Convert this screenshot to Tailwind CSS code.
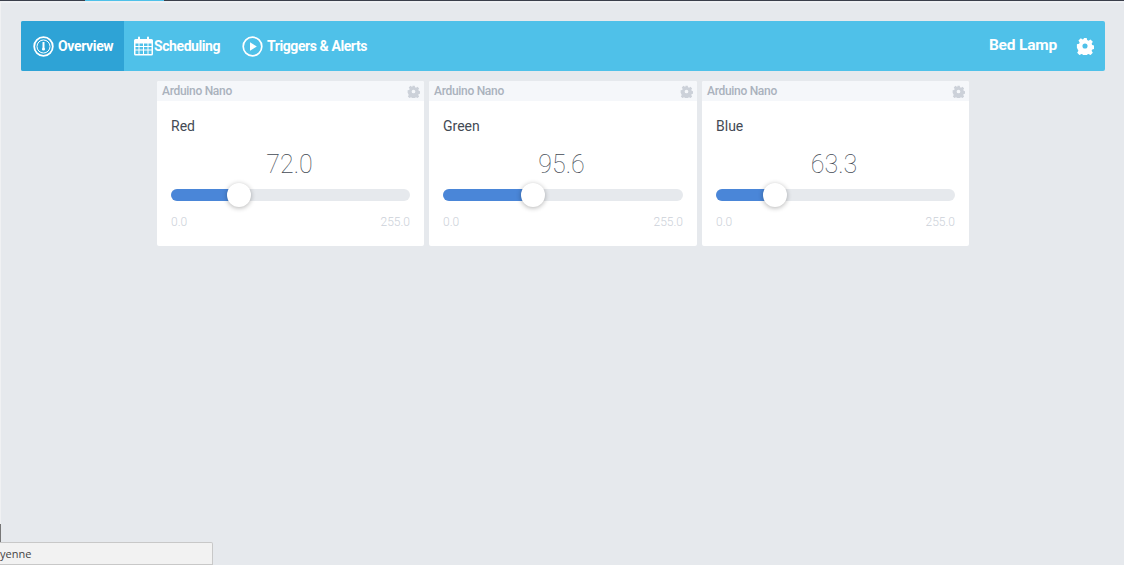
<!DOCTYPE html>
<html>
<head>
<meta charset="utf-8">
<script src="https://cdn.jsdelivr.net/npm/@tailwindcss/browser@4"></script>
</head>
<body class="relative h-[565px] w-[1124px] overflow-hidden bg-[#e6e9ed] font-['Roboto',sans-serif]">
<div class="flex h-px w-full bg-[#3a3f4b]">
  <div class="ml-[85px] w-[79px] bg-[#4fc1e9]"></div>
</div>
<div class="h-[2px] w-full bg-[#eef0f3]"></div>
<div class="absolute left-0 top-px h-[523px] w-px bg-[#f0f1f3]"></div>
<div class="px-[21px] pt-[18px] pr-[19px]">
  <nav class="flex h-[50px] items-stretch justify-between rounded-[2px] bg-[#4fc1e9] text-white">
    <div class="flex items-stretch">
      <div class="flex w-[103px] items-center gap-[4px] rounded-l-[2px] bg-[#2ea3d6] pl-[12px]">
        <svg width="21" height="21" viewBox="0 0 21 21" fill="none" stroke="white"><circle cx="10.5" cy="10.5" r="9.3" stroke-width="1.8"/><circle cx="10.5" cy="10.5" r="6.5" stroke-width="1"/><path d="M10.5 6v6" stroke-width="2"/><circle cx="10.5" cy="13" r="1.6" fill="white" stroke="none"/></svg>
        <span class="text-[14px] font-bold tracking-[-0.35px]">Overview</span>
      </div>
      <div class="flex w-[118px] items-center gap-px pl-[10px]">
        <svg width="19" height="20" viewBox="0 0 19 20" fill="white"><path fill-rule="evenodd" d="M1.5 3H4V1.5a1 1 0 0 1 2 0V3h7V1.500a1 1 0 0 1 2 0V3h2.500A1.500 1.500 0 0 1 19 4.500V18a1.500 1.500 0 0 1-1.500 1.500h-16A1.500 1.500 0 0 1 0 18V4.500A1.500 1.500 0 0 1 1.500 3ZM1.500 7.500v2.500h3V7.500Zm4 0v2.500h3.500V7.500Zm4.500 0v2.500h3.500V7.500Zm4.500 0v2.500h3V7.500ZM1.500 11v2.500h3V11Zm4 0v2.500h3.500V11Zm4.500 0v2.500h3.500V11Zm4.500 0v2.500h3V11ZM1.500 14.500V18h3v-3.500Zm4 0V18h3.500v-3.500Zm4.500 0V18h3.500v-3.500Zm4.500 0V18h3v-3.500Z"/></svg>
        <span class="text-[14px] font-bold tracking-[-0.42px]">Scheduling</span>
      </div>
      <div class="flex items-center gap-[4px]">
        <svg width="21" height="21" viewBox="0 0 21 21" fill="none"><circle cx="10.500" cy="10.500" r="9.300" stroke="white" stroke-width="1.700"/><path d="M8 6.200v8.600l6.800-4.300Z" fill="white"/></svg>
        <span class="text-[14px] font-bold tracking-[-0.42px]">Triggers &amp; Alerts</span>
      </div>
    </div>
    <div class="flex items-center gap-[19px] pr-[11px]">
      <span class="text-[15.500px] font-bold tracking-[-0.2px]">Bed Lamp</span>
      <svg width="18" height="18" viewBox="0 0 24 24" fill="white"><path fill-rule="evenodd" d="M9.500 0h5l.7 3.200 2.100.9 2.800-1.800 3.500 3.500-1.800 2.800.9 2.100 3.200.7v5l-3.200.7-.9 2.100 1.800 2.800-3.500 3.500-2.800-1.800-2.100.9-.7 3.200h-5l-.7-3.200-2.100-.9-2.800 1.800-3.500-3.500 1.800-2.800-.9-2.100L0 14.500v-5l3.200-.7.9-2.100-1.800-2.800L5.800.4l2.800 1.800 2.100-.9ZM12 8.200a3.800 3.800 0 1 0 0 7.600 3.800 3.800 0 0 0 0-7.600Z" transform="translate(1.200 1.200) scale(.9)"/></svg>
    </div>
  </nav>
  <div class="mt-[10px] ml-[136px] flex gap-[5px]">

    <section class="h-[165px] w-[267px] rounded-[2px] bg-white">
      <header class="flex h-5 items-center justify-between rounded-t-[2px] bg-[#f5f7fa] pl-[5px] pr-[4px]">
        <span class="text-[12px] font-medium tracking-[-0.3px] text-[#aab2bd]">Arduino Nano</span>
        <svg width="13" height="13" viewBox="0 0 24 24" fill="#ccd1d9"><path fill-rule="evenodd" d="M9.500 0h5l.7 3.200 2.100.9 2.800-1.800 3.500 3.500-1.800 2.800.9 2.100 3.200.7v5l-3.200.7-.9 2.100 1.800 2.800-3.500 3.500-2.800-1.800-2.100.9-.7 3.200h-5l-.7-3.200-2.100-.9-2.800 1.800-3.500-3.500 1.800-2.800-.9-2.100L0 14.500v-5l3.200-.7.9-2.100-1.800-2.800L5.800.4l2.800 1.800 2.100-.9ZM12 8.200a3.800 3.800 0 1 0 0 7.600 3.800 3.800 0 0 0 0-7.600Z" transform="translate(1.200 1.200) scale(.9)"/></svg>
      </header>
      <div class="px-[14px]">
        <p class="mt-[16px] text-[14px] leading-[18px] text-[#434a54]">Red</p>
        <p class="mt-[15px] pr-[2px] text-center text-[25px] font-thin leading-[30px] text-[#434a54]">72.0</p>
        <div class="relative mt-[9px] h-3 w-[239px] rounded-full bg-[#e6e9ed]">
          <div class="h-3 w-[68px] rounded-l-full bg-[#4a86d8]"></div>
          <div class="absolute left-[56px] top-[-6px] h-6 w-6 rounded-full bg-white shadow-[0_1px_5px_rgba(0,0,0,0.3)]"></div>
        </div>
        <div class="mt-[14px] flex justify-between text-[12px] font-light leading-[14px] text-[#ccd1d9]"><span>0.0</span><span>255.0</span></div>
      </div>
    </section>

    <section class="h-[165px] w-[268px] rounded-[2px] bg-white">
      <header class="flex h-5 items-center justify-between rounded-t-[2px] bg-[#f5f7fa] pl-[5px] pr-[4px]">
        <span class="text-[12px] font-medium tracking-[-0.3px] text-[#aab2bd]">Arduino Nano</span>
        <svg width="13" height="13" viewBox="0 0 24 24" fill="#ccd1d9"><path fill-rule="evenodd" d="M9.500 0h5l.7 3.200 2.100.9 2.800-1.800 3.500 3.500-1.800 2.800.9 2.100 3.200.7v5l-3.200.7-.9 2.100 1.800 2.800-3.500 3.500-2.800-1.800-2.100.9-.7 3.200h-5l-.7-3.200-2.100-.9-2.800 1.800-3.500-3.500 1.800-2.800-.9-2.100L0 14.500v-5l3.200-.7.9-2.100-1.800-2.800L5.800.4l2.800 1.800 2.100-.9ZM12 8.200a3.800 3.800 0 1 0 0 7.600 3.800 3.800 0 0 0 0-7.600Z" transform="translate(1.200 1.200) scale(.9)"/></svg>
      </header>
      <div class="px-[14px]">
        <p class="mt-[16px] text-[14px] leading-[18px] text-[#434a54]">Green</p>
        <p class="mt-[15px] pr-[3px] text-center text-[25px] font-thin leading-[30px] text-[#434a54]">95.6</p>
        <div class="relative mt-[9px] h-3 w-[240px] rounded-full bg-[#e6e9ed]">
          <div class="h-3 w-[90px] rounded-l-full bg-[#4a86d8]"></div>
          <div class="absolute left-[78px] top-[-6px] h-6 w-6 rounded-full bg-white shadow-[0_1px_5px_rgba(0,0,0,0.3)]"></div>
        </div>
        <div class="mt-[14px] flex justify-between text-[12px] font-light leading-[14px] text-[#ccd1d9]"><span>0.0</span><span>255.0</span></div>
      </div>
    </section>

    <section class="h-[165px] w-[267px] rounded-[2px] bg-white">
      <header class="flex h-5 items-center justify-between rounded-t-[2px] bg-[#f5f7fa] pl-[5px] pr-[4px]">
        <span class="text-[12px] font-medium tracking-[-0.3px] text-[#aab2bd]">Arduino Nano</span>
        <svg width="13" height="13" viewBox="0 0 24 24" fill="#ccd1d9"><path fill-rule="evenodd" d="M9.500 0h5l.7 3.200 2.100.9 2.800-1.800 3.500 3.500-1.800 2.800.9 2.100 3.200.7v5l-3.200.7-.9 2.100 1.800 2.800-3.500 3.500-2.800-1.800-2.100.9-.7 3.200h-5l-.7-3.200-2.100-.9-2.800 1.800-3.500-3.500 1.800-2.800-.9-2.100L0 14.500v-5l3.200-.7.9-2.100-1.800-2.800L5.800.4l2.800 1.800 2.100-.9ZM12 8.200a3.800 3.800 0 1 0 0 7.600 3.800 3.800 0 0 0 0-7.600Z" transform="translate(1.200 1.200) scale(.9)"/></svg>
      </header>
      <div class="px-[14px]">
        <p class="mt-[16px] text-[14px] leading-[18px] text-[#434a54]">Blue</p>
        <p class="mt-[15px] pr-[3px] text-center text-[25px] font-thin leading-[30px] text-[#434a54]">63.3</p>
        <div class="relative mt-[9px] h-3 w-[239px] rounded-full bg-[#e6e9ed]">
          <div class="h-3 w-[59px] rounded-l-full bg-[#4a86d8]"></div>
          <div class="absolute left-[47px] top-[-6px] h-6 w-6 rounded-full bg-white shadow-[0_1px_5px_rgba(0,0,0,0.3)]"></div>
        </div>
        <div class="mt-[14px] flex justify-between text-[12px] font-light leading-[14px] text-[#ccd1d9]"><span>0.0</span><span>255.0</span></div>
      </div>
    </section>
  </div>
</div>
<div class="absolute left-0 top-[524px] h-[18px] w-px bg-[#777]"></div>
<div class="absolute bottom-0 left-0 flex h-[23px] w-[213px] items-center rounded-tr-[2px] border-r border-t border-b border-[#c8c8c8] bg-[#f2f2f2] pt-px font-['Open_Sans',sans-serif] text-[11px] text-[#444]">yenne</div>
</body>
</html>
